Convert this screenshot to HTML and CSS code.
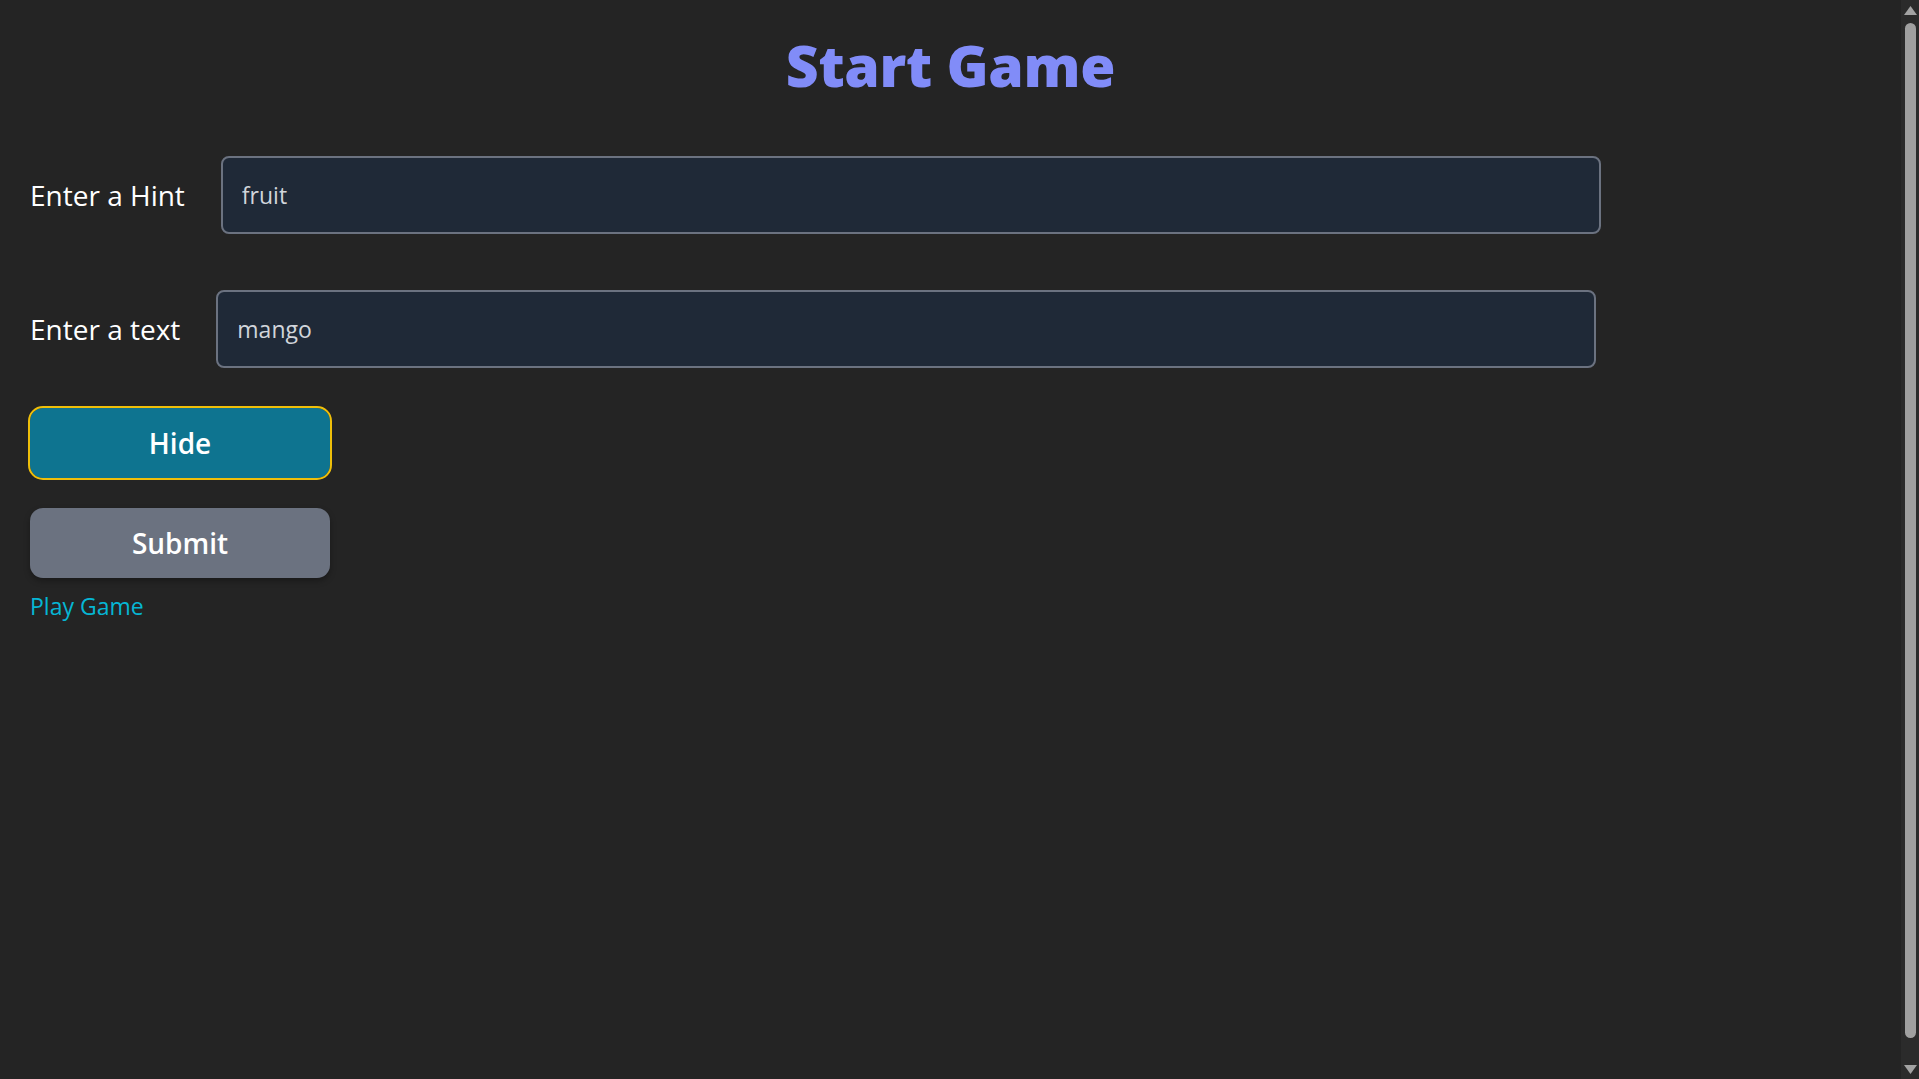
FILE: index.html
```html
<!DOCTYPE html>
<html lang="en">
<head>
<meta charset="utf-8">
<title>Start Game</title>
<link rel="stylesheet" href="styles.css">
</head>
<body>
  <main class="page">
    <h1 class="title">Start Game</h1>
    <div class="field field-hint">
      <label class="label" for="hint">Enter a Hint</label>
      <input class="input" id="hint" type="text" value="fruit">
    </div>
    <div class="field field-text">
      <label class="label" for="word">Enter a text</label>
      <input class="input" id="word" type="text" value="mango">
    </div>
    <div class="actions">
      <button class="btn btn-hide" type="button">Hide</button>
      <button class="btn btn-submit" type="button">Submit</button>
    </div>
    <a class="play-link" href="#">Play Game</a>
  </main>
  <div class="scrollbar" aria-hidden="true">
    <svg class="sb-arrow" width="13" height="9" viewBox="0 0 13 9"><polygon points="6.5,0 13,9 0,9" fill="#a3a3a3"/></svg>
    <div class="sb-track"><div class="sb-thumb"></div></div>
    <svg class="sb-arrow" width="13" height="9" viewBox="0 0 13 9"><polygon points="0,0 13,0 6.5,9" fill="#a3a3a3"/></svg>
  </div>
</body>
</html>
```

FILE: styles.css
```css
html {
  color-scheme: dark;
  background: #242424;
}

body {
  margin: 0;
  background: #242424;
  color: #ffffff;
  font-family: "Open Sans", "Noto Sans", sans-serif;
  padding-right: 18px;
}

.page {
  display: flex;
  flex-direction: column;
  align-items: flex-start;
  padding: 0 30px;
}

.title {
  align-self: stretch;
  text-align: center;
  margin: 34px 0 0 0;
  font-size: 57px;
  line-height: 1.1;
  font-weight: 800;
  color: #818cf8;
  letter-spacing: -0.3px;
}

.field {
  display: flex;
  align-items: center;
}

.field-hint {
  margin-top: 59px;
}

.field-text {
  margin-top: 56px;
}

.label {
  font-size: 28px;
  color: #ffffff;
  margin-right: 36px;
}

.input {
  box-sizing: border-box;
  width: 1380px;
  height: 78px;
  padding: 0 19px;
  background: #1f2937;
  border: 2px solid #6b7280;
  border-radius: 8px;
  color: #d1d5db;
  font-family: "Open Sans", "Noto Sans", sans-serif;
  font-size: 23px;
  outline: none;
}

.actions {
  display: flex;
  flex-direction: column;
  gap: 30px;
  margin-top: 40px;
}

.btn {
  width: 300px;
  height: 70px;
  border: none;
  border-radius: 13px;
  color: #ffffff;
  font-family: "Open Sans", "Noto Sans", sans-serif;
  font-size: 28px;
  font-weight: 600;
  cursor: pointer;
}

.btn-hide {
  background: #0e7490;
  outline: 2.5px solid #efbf0a;
  outline-offset: 0;
}

.btn-submit {
  background: #6b7280;
  box-shadow: 0 3px 6px rgba(0, 0, 0, 0.3);
}

.play-link {
  margin-top: 12px;
  color: #06b6d4;
  font-size: 23px;
  text-decoration: none;
}

.scrollbar {
  position: fixed;
  top: 0;
  right: 0;
  width: 18px;
  height: 100vh;
  background: #2b2b2b;
  display: flex;
  flex-direction: column;
  align-items: center;
  padding: 6px 0 5px;
  box-sizing: border-box;
}

.sb-track {
  flex: 1;
  width: 100%;
  display: flex;
  justify-content: center;
  padding: 8px 0 27px 1px;
  box-sizing: border-box;
}

.sb-thumb {
  width: 11px;
  height: 100%;
  background: #a0a0a0;
  border-radius: 6px;
}

.sb-arrow {
  margin-left: 1px;
}
```
